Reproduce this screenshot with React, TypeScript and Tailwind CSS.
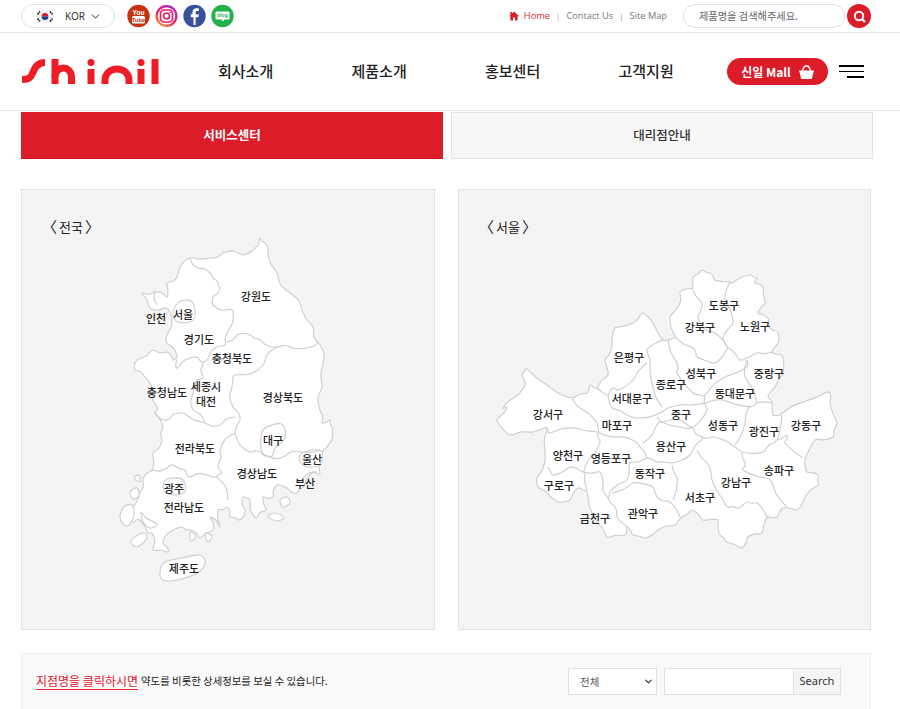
import {ChevronDown} from "lucide-react";

type Pt = [number, number];
type MapLabel = [string, number, number];

const FONT = "font-['Noto_Sans_CJK_KR','Noto_Sans',sans-serif]";

// 구간 중간점을 살짝 밀어서 지도 경계선처럼 울퉁불퉁하게
const wiggle = (pts: Pt[], amount: number, closed: boolean) => {
    const out: Pt[] = [];
    const count = closed ? pts.length : pts.length - 1;
    for (let i = 0; i < count; i++) {
        const a = pts[i];
        const b = pts[(i + 1) % pts.length];
        const dx = b[0] - a[0];
        const dy = b[1] - a[1];
        const side = (i * 7) % 3 === 0 ? 1 : (i * 7) % 3 === 1 ? -1 : 0.5;
        out.push(a);
        out.push([(a[0] + b[0]) / 2 - dy * amount * side, (a[1] + b[1]) / 2 + dx * amount * side]);
    }
    if (!closed) out.push(pts[pts.length - 1]);
    return out;
};

// Catmull-Rom 곡선으로 점을 지나는 path 생성
const smooth = (raw: Pt[], closed = false, amount = 0) => {
    const pts = amount ? wiggle(raw, amount, closed) : raw;
    const at = (i: number): Pt => closed
        ? pts[(i + pts.length) % pts.length]
        : pts[Math.max(0, Math.min(pts.length - 1, i))];
    const count = closed ? pts.length : pts.length - 1;
    let d = `M${pts[0][0]} ${pts[0][1]}`;
    for (let i = 0; i < count; i++) {
        const [p0, p1, p2, p3] = [at(i - 1), at(i), at(i + 1), at(i + 2)];
        const c1x = p1[0] + (p2[0] - p0[0]) / 6;
        const c1y = p1[1] + (p2[1] - p0[1]) / 6;
        const c2x = p2[0] - (p3[0] - p1[0]) / 6;
        const c2y = p2[1] - (p3[1] - p1[1]) / 6;
        d += `C${c1x.toFixed(1)} ${c1y.toFixed(1)} ${c2x.toFixed(1)} ${c2y.toFixed(1)} ${p2[0].toFixed(1)} ${p2[1].toFixed(1)}`;
    }
    return closed ? d + "Z" : d;
};

const KOREA_OUTLINE: Pt[] = [
    [260, 238], [265, 243], [268, 255], [277, 273], [290, 293], [302, 310], [313, 327], [320, 345], [323, 363],
    [322, 387], [320, 410], [322, 423], [330, 420], [332, 427], [327, 447], [322, 453], [320, 473], [313, 472],
    [303, 487], [297, 493], [287, 488], [277, 485], [273, 497], [263, 497], [266, 510], [256, 518], [250, 500],
    [243, 497], [245, 510], [240, 520], [230, 517], [227, 507], [218, 510], [220, 527], [210, 517], [213, 530],
    [200, 538], [190, 530], [182, 527], [170, 532], [163, 543], [168, 552], [153, 550], [152, 533], [147, 532],
    [140, 520], [133, 522], [131, 510], [140, 493], [143, 480], [152, 470],
    [153, 453], [162, 440], [163, 427], [155, 413], [157, 407], [153, 390], [145, 377], [135, 370], [137, 360],
    [153, 350], [167, 352], [173, 360], [177, 357], [167, 343], [168, 333], [172, 322], [166, 308], [150, 308],
    [142, 293], [155, 292], [167, 297], [167, 283], [177, 277], [190, 258], [210, 258], [223, 253], [243, 255],
    [253, 250],
];

const KOREA_LINES: Pt[][] = [
    [[190, 258], [198, 268], [210, 273], [218, 282], [220, 288], [213, 297], [213, 305], [232, 310], [227, 333], [225, 345], [210, 353], [203, 363]],
    [[227, 342], [237, 335], [250, 335], [260, 340], [277, 347], [293, 348], [310, 347], [318, 342]],
    [[277, 347], [263, 365], [235, 375], [232, 387], [233, 407], [240, 420], [235, 433]],
    [[235, 433], [220, 450], [218, 465], [222, 473], [217, 477], [228, 500]],
    [[235, 433], [250, 452], [262, 453], [270, 457], [283, 457], [302, 452], [320, 450]],
    [[297, 482], [303, 478], [317, 472]],
    [[152, 470], [167, 468], [173, 465], [185, 470], [190, 477], [207, 475], [217, 477]],
    [[155, 413], [167, 420], [183, 413], [205, 423], [220, 425], [235, 417]],
    [[177, 360], [177, 368], [197, 357], [203, 363], [203, 377], [197, 380], [193, 393], [193, 410], [205, 423]],
    [[155, 292], [157, 305]],
];

const KOREA_BLOBS: Pt[][] = [
    [[176, 305], [185, 300], [193, 303], [195, 316], [190, 322], [178, 322], [173, 315]],
    [[262, 432], [272, 425], [283, 425], [285, 438], [275, 448], [272, 456], [262, 453]],
    [[300, 455], [312, 450], [322, 452], [320, 465], [308, 467], [301, 463]],
    [[164, 482], [172, 478], [183, 480], [185, 491], [176, 495], [165, 492]],
    [[160, 572], [165, 562], [182, 558], [200, 555], [205, 563], [197, 573], [177, 580], [163, 580]],
    [[120, 518], [124, 507], [132, 505], [134, 516], [127, 526]],
    [[130, 492], [137, 488], [139, 496], [133, 499]],
    [[131, 541], [142, 533], [147, 538], [137, 547]],
    [[141, 512], [146, 518], [157, 524], [150, 528], [143, 522]],
    [[190, 532], [196, 536], [191, 541]],
    [[205, 533], [212, 536], [208, 542]],
    [[280, 500], [287, 497], [290, 503], [283, 507]],
    [[268, 516], [276, 513], [284, 518], [276, 521]],
    [[134, 478], [139, 475], [140, 482]],
];

const KOREA_LABELS: MapLabel[] = [
    ["강원도", 256, 296], ["서울", 183, 314], ["인천", 156, 318], ["경기도", 199, 339], ["충청북도", 232, 358],
    ["세종시", 206, 386], ["충청남도", 167, 392], ["대전", 206, 401], ["경상북도", 283, 397], ["대구", 273, 440],
    ["전라북도", 195, 448], ["울산", 312, 459], ["경상남도", 257, 473], ["부산", 305, 483], ["광주", 174, 488],
    ["전라남도", 184, 507], ["제주도", 184, 568],
];

const SEOUL_OUTLINE: Pt[] = [
    [702, 270], [710, 273], [715, 280], [730, 282], [732, 283], [750, 275], [757, 278], [755, 283], [763, 287],
    [765, 303], [758, 313], [768, 318], [770, 328], [778, 332], [778, 343], [772, 352], [782, 355], [783, 373],
    [775, 387], [768, 397], [772, 403], [773, 415], [780, 415], [803, 402], [827, 392], [830, 393], [830, 403],
    [837, 423], [833, 437], [815, 440], [805, 460], [807, 472], [818, 475], [818, 485], [805, 497], [797, 510],
    [783, 508], [777, 517], [767, 517], [762, 533], [748, 537], [742, 548], [727, 542], [720, 535], [718, 520],
    [703, 520], [692, 510], [682, 517], [675, 525], [658, 530], [645, 538], [633, 535], [627, 527], [625, 535],
    [607, 537], [597, 522], [587, 492], [578, 488], [570, 500], [558, 502], [552, 498], [538, 487], [537, 478],
    [543, 468], [545, 452], [547, 428], [533, 432], [510, 435], [497, 420], [507, 408], [503, 408], [518, 395],
    [525, 385], [522, 375], [527, 369], [547, 385], [572, 398], [587, 393], [590, 385], [597, 388], [608, 375],
    [605, 360], [612, 347], [615, 328], [633, 323], [642, 313], [653, 323], [663, 340], [675, 337], [670, 317],
    [680, 303], [680, 292], [692, 288], [693, 277],
];

const SEOUL_LINES: Pt[][] = [
    [[692, 288], [702, 303], [698, 317], [703, 328], [715, 333], [728, 348]],
    [[730, 282], [725, 300], [733, 323], [723, 337], [728, 348]],
    [[675, 337], [693, 348], [697, 357], [715, 363], [728, 348], [740, 360], [757, 353], [772, 352]],
    [[668, 340], [677, 363], [677, 373], [693, 393], [705, 395], [725, 377], [747, 367], [747, 360]],
    [[747, 360], [745, 377], [757, 403]],
    [[705, 395], [705, 403], [723, 400], [750, 407], [757, 403], [772, 403]],
    [[663, 340], [647, 350], [650, 370], [653, 387], [662, 407]],
    [[647, 363], [633, 380], [618, 390], [613, 388], [608, 395], [597, 388]],
    [[608, 395], [612, 408], [627, 415], [637, 418], [660, 413], [680, 405], [705, 403]],
    [[657, 417], [663, 422], [680, 420], [693, 427], [707, 410], [705, 403]],
    [[572, 398], [580, 408], [597, 423], [600, 433], [623, 437], [637, 443], [645, 452], [647, 458]],
    [[547, 428], [550, 433], [575, 428], [597, 432], [600, 442], [590, 458], [583, 472], [570, 467], [553, 475], [547, 467]],
    [[585, 472], [587, 490]],
    [[583, 472], [600, 472], [603, 490], [608, 498], [610, 492], [627, 480], [630, 463], [647, 458]],
    [[608, 498], [615, 507], [617, 517], [627, 527]],
    [[612, 493], [633, 483], [653, 487], [658, 498], [670, 502], [680, 517]],
    [[672, 465], [677, 478], [673, 500]],
    [[643, 443], [653, 433], [660, 422], [680, 427], [693, 428], [695, 433], [703, 438], [690, 455], [672, 463], [657, 462], [647, 458]],
    [[697, 450], [707, 463], [712, 480], [723, 500], [728, 507], [738, 508], [747, 502], [757, 503], [767, 517]],
    [[703, 438], [713, 437], [735, 447], [742, 452]],
    [[742, 452], [745, 463], [743, 470], [770, 480], [787, 507]],
    [[735, 445], [745, 423], [750, 405]],
    [[742, 452], [763, 452], [777, 440], [782, 415]],
    [[777, 440], [787, 435], [785, 443], [803, 458]],
];

const SEOUL_LABELS: MapLabel[] = [
    ["도봉구", 724, 305], ["강북구", 700, 327], ["노원구", 755, 326], ["은평구", 629, 357], ["성북구", 701, 373],
    ["중랑구", 769, 373], ["종로구", 671, 384], ["동대문구", 735, 393], ["서대문구", 632, 398], ["강서구", 548, 414],
    ["중구", 681, 414], ["마포구", 617, 425], ["성동구", 723, 425], ["광진구", 764, 431], ["강동구", 806, 425],
    ["용산구", 671, 446], ["양천구", 568, 455], ["영등포구", 611, 458], ["동작구", 650, 473], ["송파구", 779, 470],
    ["강남구", 736, 482], ["구로구", 559, 485], ["서초구", 700, 497], ["금천구", 595, 518], ["관악구", 643, 513],
];

function KoreaFlag() {
    return (
        <svg width="18" height="13" viewBox="0 0 18 13">
            <rect width="18" height="13" fill="#f4f4f4"/>
            <path d="M5.600 6.500a3.400 3.400 0 0 1 6.800 0z" fill="#d8232f"/>
            <path d="M5.600 6.500a3.400 3.400 0 0 0 6.800 0z" fill="#123f8c"/>
            <g stroke="#222" strokeWidth="1.600" strokeDasharray="2 .6">
                <path d="M1.500 4.500l2.500-3M14 1.500l2.500 3M1.500 8.500l2.500 3M14 11.500l2.500-3"/>
            </g>
        </svg>
    );
}

function SocialIcons() {
    return (
        <div className="flex items-center gap-[5px] ml-[12px]">
            <svg width="23" height="24" viewBox="0 0 23 24">
                <circle cx="11.500" cy="12" r="11.200" fill="#c4330e"/>
                <text x="11.500" y="10.500" textAnchor="middle" fontSize="6.500" fontWeight="700" fill="#fff"
                      fontFamily="'Liberation Sans',sans-serif">You</text>
                <rect x="5" y="12" width="13" height="7.500" rx="1.500" fill="#fff"/>
                <text x="11.500" y="18" textAnchor="middle" fontSize="6" fontWeight="700" fill="#c4330e"
                      fontFamily="'Liberation Sans',sans-serif">Tube</text>
            </svg>
            <svg width="23" height="24" viewBox="0 0 23 24">
                <defs>
                    <linearGradient id="insta" x1="0.15" y1="1" x2="0.85" y2="0">
                        <stop offset="0" stopColor="#fdb01f"/>
                        <stop offset="0.4" stopColor="#f01f58"/>
                        <stop offset="0.75" stopColor="#c3219c"/>
                        <stop offset="1" stopColor="#6a3cc8"/>
                    </linearGradient>
                </defs>
                <circle cx="11.500" cy="12" r="11" fill="url(#insta)"/>
                <circle cx="11.500" cy="12" r="8.700" fill="#fff"/>
                <rect x="5.500" y="6" width="12" height="12" rx="3.400" fill="none" stroke="#ec1f6b" strokeWidth="1.700"/>
                <circle cx="11.500" cy="12" r="3" fill="none" stroke="#ec1f6b" strokeWidth="1.700"/>
                <circle cx="15.200" cy="8.300" r=".9" fill="#d42a90"/>
            </svg>
            <svg width="23" height="24" viewBox="0 0 23 24">
                <circle cx="11.500" cy="12" r="11.200" fill="#39519b"/>
                <path d="M12.600 21v-7.800h2.700l.4-3h-3.100V8.500c0-.9.3-1.500 1.600-1.500h1.600V4.300c-.3 0-1.300-.1-2.300-.1-2.400 0-4 1.400-4 4.100v1.900H7.800v3h2.700V21z" fill="#fff"/>
            </svg>
            <svg width="23" height="24" viewBox="0 0 23 24">
                <circle cx="11.500" cy="12" r="11.200" fill="#23b14d"/>
                <path d="M5.500 7.500h12a1 1 0 0 1 1 1v6a1 1 0 0 1-1 1h-4l-1.500 2-1.500-2h-5a1 1 0 0 1-1-1v-6a1 1 0 0 1 1-1z" fill="#fff"/>
                <text x="11.500" y="13.200" textAnchor="middle" fontSize="4.800" fontWeight="700" fill="#23b14d"
                      fontFamily="'Liberation Sans',sans-serif">blog</text>
            </svg>
        </div>
    );
}

// 로고 (원본도 아래가 잘려 있음)
function Logo() {
    return (
        <svg width="137" height="25" viewBox="22 62 137 25" className="shrink-0">
            <g fill="none" stroke="#ee1c25" strokeWidth="7">
                <path d="M22 82.500c7 0 9-2 11-7 2-6 5-10 12-10"/>
                <path d="M55 62v25"/>
                <path d="M55 80c0-6 5-9 8.500-9s8 3 8 9v7"/>
                <path d="M91 72v15"/>
                <path d="M105 87v-4c0-7 6-11 12-11s12 4 12 11v4"/>
                <path d="M141 72v15"/>
                <path d="M155 62v25"/>
            </g>
            <circle cx="91" cy="65.500" r="3.500" fill="#ee1c25"/>
            <circle cx="141" cy="65.500" r="3.500" fill="#ee1c25"/>
        </svg>
    );
}

function BasketIcon() {
    return (
        <svg width="15" height="14" viewBox="0 0 15 14">
            <path d="M0 5.500h15l-.5 1.500-1.500 6.500a.8.8 0 0 1-.8.500H2.800a.8.8 0 0 1-.8-.500L.5 7z" fill="#fff"/>
            <path d="M3.500 6c.5-3 1.500-5 4-5s3.500 2 4 5" fill="none" stroke="#fff" strokeWidth="1.400"/>
        </svg>
    );
}

function HomeIcon() {
    return (
        <svg width="10" height="10" viewBox="0 0 10 10" className="mr-[5px]">
            <path d="M5 .6L10 5.200H8.600V9.600H6V6.400H4V9.600H1.400V5.200H0L1.400 3.900V1H3V2.500z" fill="#d81f2a"/>
        </svg>
    );
}

function TopBar() {
    return (
        <div className="flex h-[33px] items-center border-b border-[#e6e6e6] pl-[21px] pr-[29px]">
            <div className="flex h-[24px] w-[94px] items-center rounded-full border border-[#e3e3e3] pl-[14px]">
                <KoreaFlag/>
                <span className="ml-[11px] font-['Noto_Sans',sans-serif] text-[10px] text-[#333]">KOR</span>
                <ChevronDown size={13} strokeWidth={1.800} className="ml-[4px] text-[#222]"/>
            </div>
            <SocialIcons/>
            <div className="ml-auto flex items-center font-['Open_Sans',sans-serif] text-[9.250px] text-[#777]">
                <HomeIcon/>
                <span className="text-[#d81f2a]">Home</span>
                <span className="mx-[6px] text-[8px] text-[#999]">|</span>
                <span>Contact Us</span>
                <span className="mx-[6px] text-[8px] text-[#999]">|</span>
                <span>Site Map</span>
            </div>
            <div className="ml-[16px] flex h-[24px] w-[162px] items-center rounded-full border border-[#e3e3e3] pl-[15px]">
                <span className={`${FONT} text-[10.200px] text-[#666]`}>제품명을 검색해주세요.</span>
            </div>
            <button className="ml-[2px] flex h-[24px] w-[24px] items-center justify-center rounded-full bg-[#dc1c28]">
                <svg width="13" height="13" viewBox="0 0 13 13" fill="none" stroke="#fff">
                    <circle cx="6" cy="6" r="4.200" strokeWidth="2"/>
                    <path d="M9 9l3 3" strokeWidth="2.200"/>
                </svg>
            </button>
        </div>
    );
}

function MainNav() {
    return (
        <div className="flex h-[78px] items-center border-b border-[#e6e6e6] pl-[22px] pr-[36px]">
            <Logo/>
            <nav className={`${FONT} ml-[59px] flex gap-[78.300px] text-[15px] font-medium text-[#222]`}>
                <span>회사소개</span>
                <span>제품소개</span>
                <span>홍보센터</span>
                <span>고객지원</span>
            </nav>
            <button className="ml-auto flex h-[27px] w-[101px] items-center justify-center gap-[8px] rounded-full bg-[#dc1c28]">
                <span className={`${FONT} text-[12px] font-bold text-white`}>신일 Mall</span>
                <BasketIcon/>
            </button>
            <div className="ml-[11px] flex w-[25px] flex-col items-end">
                <span className="h-[1.500px] w-[25px] bg-black"/>
                <span className="mt-[4px] h-[1.500px] w-[25px] bg-black"/>
                <span className="mt-[4px] h-[1.500px] w-[17px] bg-black"/>
            </div>
        </div>
    );
}

function Tabs() {
    return (
        <div className={`${FONT} mt-px flex gap-[8px] pl-[21px] text-[12.500px]`}>
            <div className="flex h-[47px] w-[422px] items-center justify-center border-b border-[#d0101c] bg-[#dc1c28] font-bold text-white">
                서비스센터
            </div>
            <div className="flex h-[47px] w-[422px] items-center justify-center border border-[#e2e2e2] bg-[#f7f7f7] font-medium text-[#333]">
                대리점안내
            </div>
        </div>
    );
}

function RegionMap({viewBox, outline, lines, blobs, labels, rough}: {
    viewBox: string;
    outline: Pt[];
    lines: Pt[][];
    blobs?: Pt[][];
    labels: MapLabel[];
    rough: number;
}) {
    return (
        <svg width="412" height="391" viewBox={viewBox} className="block">
            <g stroke="#cccccc" strokeWidth="1.100" strokeLinejoin="round">
                <path d={smooth(outline, true, rough)} fill="#fff"/>
                {blobs?.map((b, i) => (
                    <path key={i} d={smooth(b, true)} fill="#fff"/>
                ))}
                {lines.map((l, i) => (
                    <path key={i} d={smooth(l, false, rough)} fill="none"/>
                ))}
            </g>
            {labels.map(([name, x, y]) => (
                <text key={name} x={x} y={y + 5} textAnchor="middle" fontSize="11" fontWeight="500" fill="#222"
                      fontFamily="'Noto Sans CJK KR',sans-serif">{name}</text>
            ))}
        </svg>
    );
}

function MapPanel({title, className, children}: {
    title: string;
    className: string;
    children: React.ReactNode;
}) {
    return (
        <div className={`${className} h-[441px] border border-[#e3e3e3] bg-[#f4f4f4]`}>
            <div className={`${FONT} flex h-[48px] items-start pl-[20px] pt-[25px] text-[15px] leading-[24px] text-[#222]`}>
                <span>〈</span>
                <span className="mx-[2px] text-[13px]">{title}</span>
                <span>〉</span>
            </div>
            {children}
        </div>
    );
}

function SearchBar() {
    return (
        <div className="ml-[21px] mt-[23px] flex h-[80px] w-[850px] items-start border border-[#eeeeee] bg-[#f9f9f9] pl-[14px] pr-[29px] pt-[14px]">
            <div className={`${FONT} flex h-[26px] items-center`}>
                <span className="border-b border-[#e8303c] text-[12px] leading-[17px] text-[#e0202c]">지점명을 클릭하시면</span>
                <span className="ml-[3px] text-[10.400px] text-[#222]">약도를 비롯한 상세정보를 보실 수 있습니다.</span>
            </div>
            <div className="ml-auto flex h-[27px] items-stretch font-['Noto_Sans',sans-serif]">
                <div className={`${FONT} flex w-[89px] items-center justify-between border border-[#e0e0e0] bg-white pl-[11px] pr-[2px] text-[10.500px] text-[#555]`}>
                    전체
                    <ChevronDown size={11} strokeWidth={2.500} className="text-[#333]"/>
                </div>
                <div className="ml-[7px] w-[130px] border border-[#e0e0e0] bg-white"/>
                <div className="flex w-[47px] items-center justify-center border border-l-0 border-[#e0e0e0] bg-[#f5f5f5] text-[11px] text-[#333]">
                    Search
                </div>
            </div>
        </div>
    );
}

export default function App() {
    return (
        <div className="h-[709px] w-[900px] overflow-hidden bg-white">
            <TopBar/>
            <MainNav/>
            <Tabs/>
            <div className="ml-[21px] mt-[30px] flex gap-[23px]">
                <MapPanel title="전국" className="w-[414px]">
                    <RegionMap viewBox="22 238 412 391" outline={KOREA_OUTLINE} lines={KOREA_LINES} blobs={KOREA_BLOBS}
                               labels={KOREA_LABELS} rough={0.14}/>
                </MapPanel>
                <MapPanel title="서울" className="w-[413px]">
                    <RegionMap viewBox="459 238 412 391" outline={SEOUL_OUTLINE} lines={SEOUL_LINES}
                               labels={SEOUL_LABELS} rough={0.07}/>
                </MapPanel>
            </div>
            <SearchBar/>
        </div>
    );
}
